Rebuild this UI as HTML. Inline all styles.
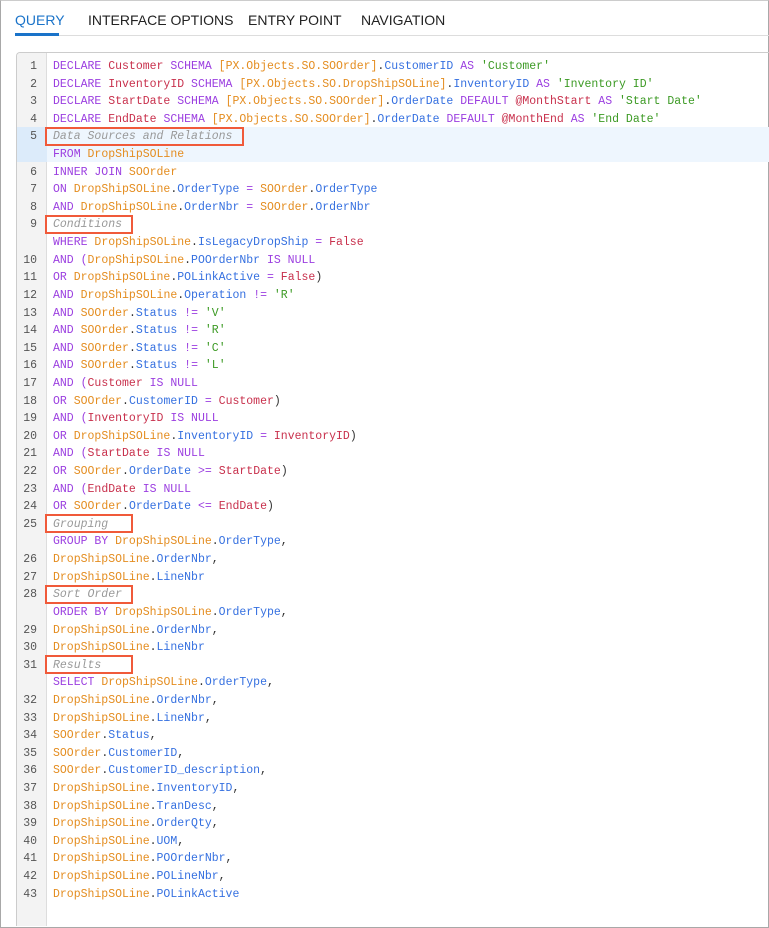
<!DOCTYPE html>
<html><head><meta charset="utf-8"><style>
*{margin:0;padding:0;box-sizing:border-box}
body{width:769px;height:928px;background:#fff;position:relative;overflow:hidden;font-family:"Liberation Sans",sans-serif}
.frame{position:absolute;left:0;top:0;width:769px;height:928px;border:1px solid #a8a8a8;border-top-color:#ccc}
.tabs{position:absolute;left:15px;top:12px;font-size:14px;color:#222}
.tabs span{position:absolute;white-space:nowrap;top:0}
.tabline{position:absolute;left:15px;right:0;top:35px;height:1px;background:#ddd}
.tabu{position:absolute;left:15px;top:33px;width:44px;height:3px;background:#1a73c9}
.ed{position:absolute;left:16px;top:52px;width:753px;height:874px;border:1px solid #ccc;border-right:none;border-bottom:none;border-radius:4px 0 0 0;overflow:hidden}
.gut{position:absolute;left:0;top:0;width:30px;height:100%;background:#f3f3f3;border-right:1px solid #ddd}
.hl{position:absolute;left:0;right:0;top:74px;height:35.3px;background:#eef6fe}
.hlg{position:absolute;left:0;width:30px;top:74px;height:35.3px;background:#dcebfa}
.code{position:absolute;left:0;top:5px;width:740px;font-family:"Liberation Mono",monospace;font-size:11.5px;line-height:17.62px;color:#333}
.row{height:17.62px;position:relative}
.n{position:absolute;left:0;width:20px;text-align:right;color:#555}
.t{position:absolute;left:36px;white-space:pre}
.k{color:#9b3ee0}.v{color:#c8304c}.o{color:#e48d20}.f{color:#3570e0}.s{color:#3c9a24}.c{color:#999;font-style:italic}
.box{position:absolute;border:2px solid #f05a3a;height:19px}
</style></head><body>
<div class="frame"></div>
<div class="tabs">
<span style="left:0;color:#1a73c9">QUERY</span>
<span style="left:73px">INTERFACE OPTIONS</span>
<span style="left:233px">ENTRY POINT</span>
<span style="left:346px">NAVIGATION</span>
</div>
<div class="tabline"></div><div class="tabu"></div>
<div class="ed">
<div class="gut"></div>
<div class="hl"></div><div class="hlg"></div>
<div class="code"><div class="row"><span class="n">1</span><span class="t"><span class="k">DECLARE</span> <span class="v">Customer</span> <span class="k">SCHEMA</span> <span class="o">[PX.Objects.SO.SOOrder]</span>.<span class="f">CustomerID</span> <span class="k">AS</span> <span class="s">'Customer'</span></span></div><div class="row"><span class="n">2</span><span class="t"><span class="k">DECLARE</span> <span class="v">InventoryID</span> <span class="k">SCHEMA</span> <span class="o">[PX.Objects.SO.DropShipSOLine]</span>.<span class="f">InventoryID</span> <span class="k">AS</span> <span class="s">'Inventory ID'</span></span></div><div class="row"><span class="n">3</span><span class="t"><span class="k">DECLARE</span> <span class="v">StartDate</span> <span class="k">SCHEMA</span> <span class="o">[PX.Objects.SO.SOOrder]</span>.<span class="f">OrderDate</span> <span class="k">DEFAULT</span> <span class="v">@MonthStart</span> <span class="k">AS</span> <span class="s">'Start Date'</span></span></div><div class="row"><span class="n">4</span><span class="t"><span class="k">DECLARE</span> <span class="v">EndDate</span> <span class="k">SCHEMA</span> <span class="o">[PX.Objects.SO.SOOrder]</span>.<span class="f">OrderDate</span> <span class="k">DEFAULT</span> <span class="v">@MonthEnd</span> <span class="k">AS</span> <span class="s">'End Date'</span></span></div><div class="row"><span class="n">5</span><span class="t c">Data Sources and Relations</span></div><div class="row"><span class="t"><span class="k">FROM</span> <span class="o">DropShipSOLine</span></span></div><div class="row"><span class="n">6</span><span class="t"><span class="k">INNER JOIN</span> <span class="o">SOOrder</span></span></div><div class="row"><span class="n">7</span><span class="t"><span class="k">ON</span> <span class="o">DropShipSOLine</span>.<span class="f">OrderType</span> <span class="k">=</span> <span class="o">SOOrder</span>.<span class="f">OrderType</span></span></div><div class="row"><span class="n">8</span><span class="t"><span class="k">AND</span> <span class="o">DropShipSOLine</span>.<span class="f">OrderNbr</span> <span class="k">=</span> <span class="o">SOOrder</span>.<span class="f">OrderNbr</span></span></div><div class="row"><span class="n">9</span><span class="t c">Conditions</span></div><div class="row"><span class="t"><span class="k">WHERE</span> <span class="o">DropShipSOLine</span>.<span class="f">IsLegacyDropShip</span> <span class="k">=</span> <span class="v">False</span></span></div><div class="row"><span class="n">10</span><span class="t"><span class="k">AND (</span><span class="o">DropShipSOLine</span>.<span class="f">POOrderNbr</span> <span class="k">IS NULL</span></span></div><div class="row"><span class="n">11</span><span class="t"><span class="k">OR</span> <span class="o">DropShipSOLine</span>.<span class="f">POLinkActive</span> <span class="k">=</span> <span class="v">False</span>)</span></div><div class="row"><span class="n">12</span><span class="t"><span class="k">AND</span> <span class="o">DropShipSOLine</span>.<span class="f">Operation</span> <span class="k">!=</span> <span class="s">'R'</span></span></div><div class="row"><span class="n">13</span><span class="t"><span class="k">AND</span> <span class="o">SOOrder</span>.<span class="f">Status</span> <span class="k">!=</span> <span class="s">'V'</span></span></div><div class="row"><span class="n">14</span><span class="t"><span class="k">AND</span> <span class="o">SOOrder</span>.<span class="f">Status</span> <span class="k">!=</span> <span class="s">'R'</span></span></div><div class="row"><span class="n">15</span><span class="t"><span class="k">AND</span> <span class="o">SOOrder</span>.<span class="f">Status</span> <span class="k">!=</span> <span class="s">'C'</span></span></div><div class="row"><span class="n">16</span><span class="t"><span class="k">AND</span> <span class="o">SOOrder</span>.<span class="f">Status</span> <span class="k">!=</span> <span class="s">'L'</span></span></div><div class="row"><span class="n">17</span><span class="t"><span class="k">AND (</span><span class="v">Customer</span> <span class="k">IS NULL</span></span></div><div class="row"><span class="n">18</span><span class="t"><span class="k">OR</span> <span class="o">SOOrder</span>.<span class="f">CustomerID</span> <span class="k">=</span> <span class="v">Customer</span>)</span></div><div class="row"><span class="n">19</span><span class="t"><span class="k">AND (</span><span class="v">InventoryID</span> <span class="k">IS NULL</span></span></div><div class="row"><span class="n">20</span><span class="t"><span class="k">OR</span> <span class="o">DropShipSOLine</span>.<span class="f">InventoryID</span> <span class="k">=</span> <span class="v">InventoryID</span>)</span></div><div class="row"><span class="n">21</span><span class="t"><span class="k">AND (</span><span class="v">StartDate</span> <span class="k">IS NULL</span></span></div><div class="row"><span class="n">22</span><span class="t"><span class="k">OR</span> <span class="o">SOOrder</span>.<span class="f">OrderDate</span> <span class="k">&gt;=</span> <span class="v">StartDate</span>)</span></div><div class="row"><span class="n">23</span><span class="t"><span class="k">AND (</span><span class="v">EndDate</span> <span class="k">IS NULL</span></span></div><div class="row"><span class="n">24</span><span class="t"><span class="k">OR</span> <span class="o">SOOrder</span>.<span class="f">OrderDate</span> <span class="k">&lt;=</span> <span class="v">EndDate</span>)</span></div><div class="row"><span class="n">25</span><span class="t c">Grouping</span></div><div class="row"><span class="t"><span class="k">GROUP BY</span> <span class="o">DropShipSOLine</span>.<span class="f">OrderType</span>,</span></div><div class="row"><span class="n">26</span><span class="t"><span class="o">DropShipSOLine</span>.<span class="f">OrderNbr</span>,</span></div><div class="row"><span class="n">27</span><span class="t"><span class="o">DropShipSOLine</span>.<span class="f">LineNbr</span></span></div><div class="row"><span class="n">28</span><span class="t c">Sort Order</span></div><div class="row"><span class="t"><span class="k">ORDER BY</span> <span class="o">DropShipSOLine</span>.<span class="f">OrderType</span>,</span></div><div class="row"><span class="n">29</span><span class="t"><span class="o">DropShipSOLine</span>.<span class="f">OrderNbr</span>,</span></div><div class="row"><span class="n">30</span><span class="t"><span class="o">DropShipSOLine</span>.<span class="f">LineNbr</span></span></div><div class="row"><span class="n">31</span><span class="t c">Results</span></div><div class="row"><span class="t"><span class="k">SELECT</span> <span class="o">DropShipSOLine</span>.<span class="f">OrderType</span>,</span></div><div class="row"><span class="n">32</span><span class="t"><span class="o">DropShipSOLine</span>.<span class="f">OrderNbr</span>,</span></div><div class="row"><span class="n">33</span><span class="t"><span class="o">DropShipSOLine</span>.<span class="f">LineNbr</span>,</span></div><div class="row"><span class="n">34</span><span class="t"><span class="o">SOOrder</span>.<span class="f">Status</span>,</span></div><div class="row"><span class="n">35</span><span class="t"><span class="o">SOOrder</span>.<span class="f">CustomerID</span>,</span></div><div class="row"><span class="n">36</span><span class="t"><span class="o">SOOrder</span>.<span class="f">CustomerID_description</span>,</span></div><div class="row"><span class="n">37</span><span class="t"><span class="o">DropShipSOLine</span>.<span class="f">InventoryID</span>,</span></div><div class="row"><span class="n">38</span><span class="t"><span class="o">DropShipSOLine</span>.<span class="f">TranDesc</span>,</span></div><div class="row"><span class="n">39</span><span class="t"><span class="o">DropShipSOLine</span>.<span class="f">OrderQty</span>,</span></div><div class="row"><span class="n">40</span><span class="t"><span class="o">DropShipSOLine</span>.<span class="f">UOM</span>,</span></div><div class="row"><span class="n">41</span><span class="t"><span class="o">DropShipSOLine</span>.<span class="f">POOrderNbr</span>,</span></div><div class="row"><span class="n">42</span><span class="t"><span class="o">DropShipSOLine</span>.<span class="f">POLineNbr</span>,</span></div><div class="row"><span class="n">43</span><span class="t"><span class="o">DropShipSOLine</span>.<span class="f">POLinkActive</span></span></div></div>
</div>
<div class="box" style="left:45px;top:127px;width:199px"></div>
<div class="box" style="left:45px;top:215px;width:88px"></div>
<div class="box" style="left:45px;top:514px;width:88px"></div>
<div class="box" style="left:45px;top:585px;width:88px"></div>
<div class="box" style="left:45px;top:655px;width:88px"></div>
</body></html>
